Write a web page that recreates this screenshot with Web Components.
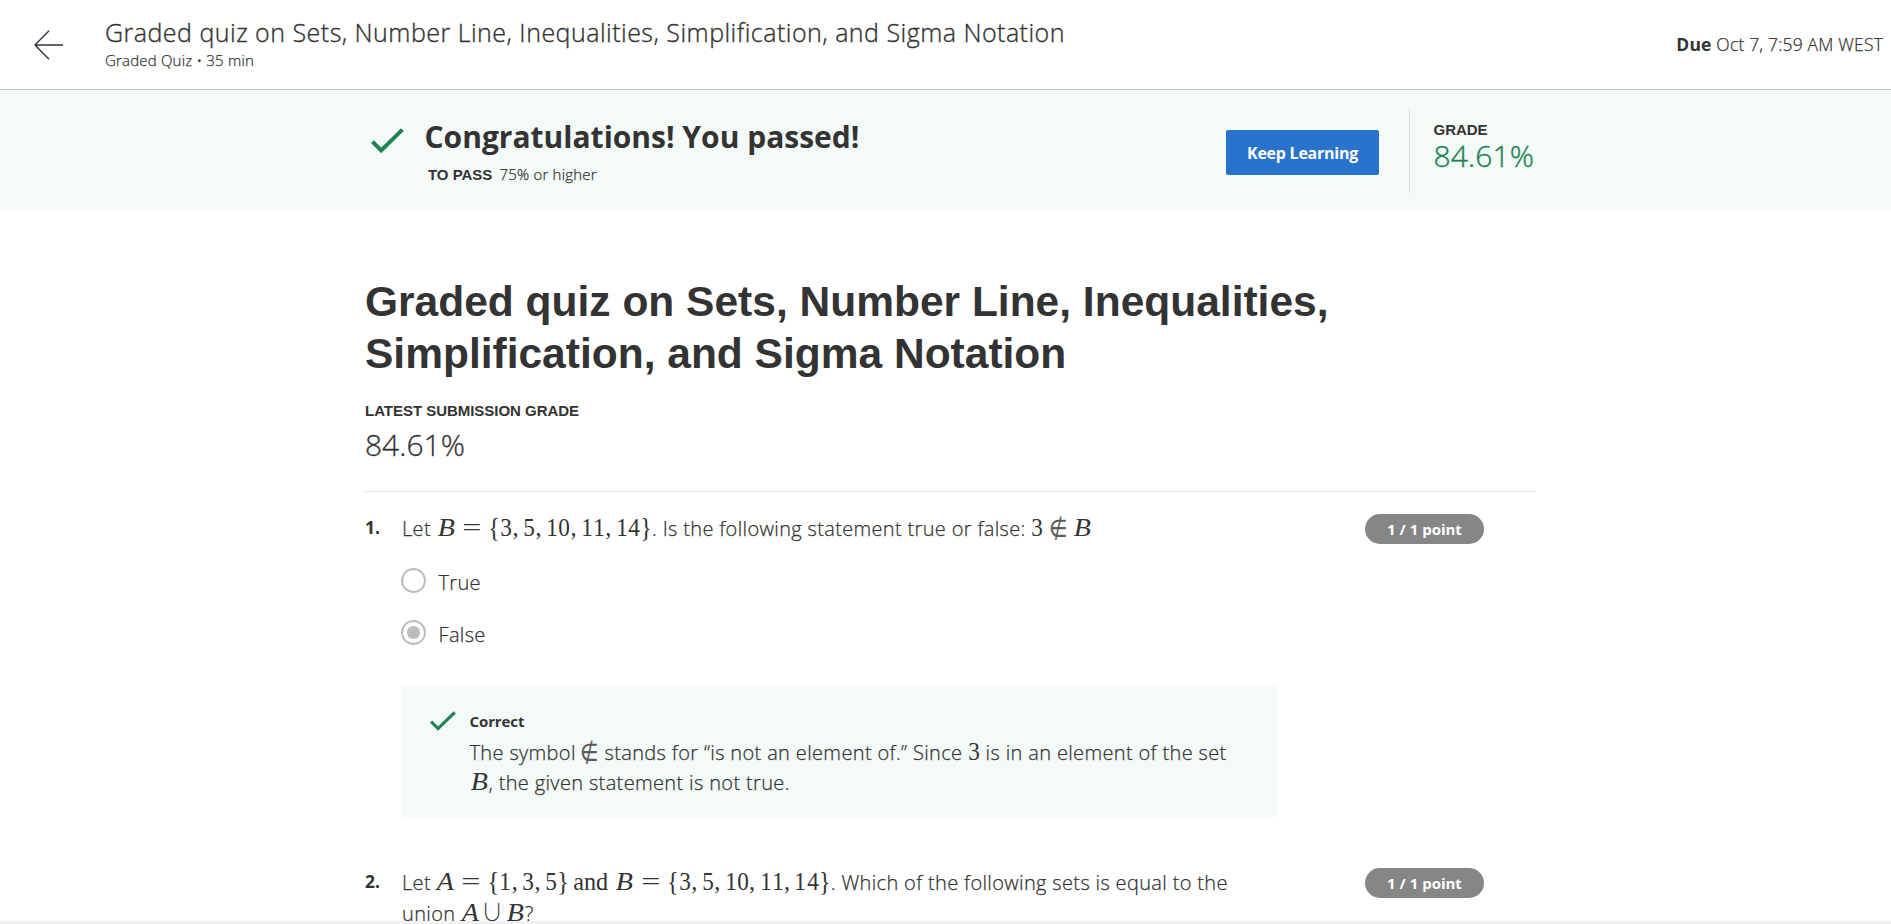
<!DOCTYPE html>
<html lang="en">
<head>
<meta charset="utf-8">
<title>Graded quiz</title>
<style>
html,body{margin:0;height:100%;background:#fff}
body{font-family:"Open Sans",sans-serif;color:#333;overflow:hidden}
</style>
</head>
<body>
<quiz-page></quiz-page>
<script>
const define = (name, html, setup) => {
  const t = document.createElement('template');
  t.innerHTML = html;
  customElements.define(name, class extends HTMLElement {
    constructor() {
      super();
      this.attachShadow({mode: 'open'}).append(t.content.cloneNode(true));
    }
    connectedCallback() { if (setup) setup(this, this.shadowRoot); }
  });
};

define('check-icon', `<style>:host{display:block;flex:none}svg{display:block;width:100%;height:100%}</style>
<svg viewBox="0 0 33 26" fill="none" stroke="#1d8354" stroke-width="4"><path d="M1.4 13.6 L10.2 22.4 L31.4 1.6"/></svg>`);

/* Inline formula: each character of the expression gets its own typeset box. */
const BOX = {
  'A':['v',.75,'1.16,1'], 'B':['v',.785,'1.16,1'], '=':['o',.778,'1.4,1',.285], '{':['n',.5,'1,1.1'], '}':['n',.5,'1,1.1'],
  ',':['n',.278,'1,1',0,.167], '∪':['u',.667,'.9,1',.222], '∉':['e',.667,'.83,1',.278]
};
define('math-expr', `<style>
:host{white-space:nowrap;letter-spacing:0;-webkit-text-stroke:0;font:24.2px/0 "Liberation Serif",serif}
b{font-weight:inherit;display:inline-block;text-align:center;line-height:0}
i{display:inline-block;line-height:0;margin:0 -1em}
.n,.o,.u,.e{font-style:normal}
.u{font-family:"Noto Sans CJK JP",sans-serif;font-weight:300}
.e{font-family:"DejaVu Math TeX Gyre","DejaVu Serif",serif;font-size:28px;opacity:.8}
</style><span></span>`, (el, root) => {
  const out = root.querySelector('span');
  out.textContent = '';
  for (const ch of el.textContent.replace(/ /g, '')) {
    const [kind, w, scale, m = 0, mr = m] = BOX[ch] || ['n', .5, '.96,1'];
    const b = document.createElement('b'), i = document.createElement('i');
    const solo = el.hasAttribute('solo');
    b.style.cssText = `width:${w}em;margin:0 ${solo ? 0 : mr}em 0 ${solo ? 0 : m}em`;
    i.className = kind; i.textContent = ch; i.style.transform = `scale(${scale})`;
    b.append(i); out.append(b);
  }
});

define('quiz-header', `<style>
:host{display:flex;box-sizing:border-box;height:90px;border-bottom:1px solid #bdbabd;background:#fff;padding:0 8px 0 34px;-webkit-text-stroke:.25px}
svg{display:block;width:30px;height:30px;margin:29.5px 41px 0 0;flex:none}
.t{padding-top:16px;flex:1}
h2{margin:0;font-size:25px;line-height:33px;font-weight:300;letter-spacing:.48px;-webkit-text-stroke:.35px}
p{margin:0;font-size:15px;line-height:22px;font-weight:300;letter-spacing:.19px}
.d{font-size:17.5px;line-height:24px;padding-top:31.5px;font-weight:300;letter-spacing:.18px}
.d b{font-weight:700;-webkit-text-stroke:0}
</style>
<svg viewBox="0 0 30 30" fill="none" stroke="#2f3640" stroke-width="1.4"><path d="M29 15H1M15 .8 L1 15 L15 29.2"/></svg>
<div class="t"><h2>Graded quiz on Sets, Number Line, Inequalities, Simplification, and Sigma Notation</h2><p>Graded Quiz • 35 min</p></div>
<div class="d"><b>Due</b> Oct 7, 7:59 AM WEST</div>`);

define('caps-label', `<style>:host{display:inline-block;font:bold 15px/20px "Liberation Sans",Arial,sans-serif;letter-spacing:-.03px;-webkit-text-stroke:0}</style><slot></slot>`);
define('primary-button', `<style>:host{display:block;width:153px;height:45px;background:#2a73cc;color:#fff;border-radius:2px;text-align:center;font-weight:700;font-size:16px;letter-spacing:-.25px;line-height:46px}</style><slot></slot>`);

define('result-banner', `<style>
:host{display:flex;box-sizing:border-box;height:120px;background:#f3faf8;padding-left:365px}
check-icon{width:33px;height:26px;margin:37.5px 21px 0 6px}
.t{padding-top:27px;width:801px}
h3{margin:0 0 0 -.5px;font-size:30px;line-height:40px;font-weight:700}
p{margin:6px 0 0 3px;font-size:15px;line-height:22px;font-weight:300;letter-spacing:.22px;-webkit-text-stroke:.25px}
p span{margin-left:3px}
primary-button{margin-top:40px}
.g{margin:18px 0 0 30px;border-left:1px solid #ddd;height:85px;padding-left:23.5px;box-sizing:border-box}
.g caps-label{display:block;margin-top:12px;height:20px}
.g div{font-size:30px;line-height:36px;color:#1d8354;font-weight:300;margin-top:-2px;letter-spacing:.1px;-webkit-text-stroke:.4px}
</style>
<check-icon></check-icon>
<div class="t"><h3>Congratulations! You passed!</h3><p><caps-label>TO PASS</caps-label> <span>75% or higher</span></p></div>
<primary-button>Keep Learning</primary-button>
<div class="g"><caps-label>GRADE</caps-label><div>84.61%</div></div>`);

define('quiz-title', `<style>
:host{display:block;box-sizing:border-box;border-bottom:1px solid #e1e1e1;height:282px}
h1{margin:0;padding-top:66px;font:bold 42.5px/52px "Liberation Sans",Arial,sans-serif}
caps-label{display:block;margin-top:21px}
p{margin:4px 0 0;font-size:30px;line-height:40px;font-weight:300;-webkit-text-stroke:.3px}
</style>
<h1>Graded quiz on Sets, Number Line, Inequalities,<br>Simplification, and Sigma Notation</h1>
<caps-label>LATEST SUBMISSION GRADE</caps-label>
<p>84.61%</p>`);

define('point-pill', `<style>:host{display:block;width:119px;height:30px;border-radius:15px;background:#868686;color:#fff;text-align:center;font-weight:700;font-size:15px;line-height:30px}</style><slot></slot>`);

define('quiz-question', `<style>
:host{display:grid;grid-template-columns:37px 963px 119px;align-items:start}
.n{font-size:17.5px;font-weight:700;line-height:30px;margin-top:-1px}
.q{font-size:20px;line-height:31px;font-weight:300;letter-spacing:.34px;-webkit-text-stroke:.25px}
point-pill{margin-top:1px}
.more{grid-column:2}
</style>
<div class="n"><slot name="n"></slot></div><div class="q"><slot name="q"></slot></div><point-pill><slot name="p"></slot></point-pill><div class="more"><slot></slot></div>`);

define('radio-option', `<style>
:host{display:flex;height:52px;font-size:20px;font-weight:300;line-height:30px;letter-spacing:.34px;-webkit-text-stroke:.25px}
i{box-sizing:border-box;width:25px;height:25px;border:2.5px solid #bdbdbd;border-radius:50%;margin:0 12.5px 0 -1px;display:grid;place-items:center}
:host([checked]) i::after{content:"";width:12.5px;height:12.5px;border-radius:50%;background:#bdbdbd}
</style><i></i><slot></slot>`);

define('feedback-box', `<style>
:host{display:flex;box-sizing:border-box;width:875px;height:131px;background:#f3faf8;padding-left:28px}
check-icon{width:26px;height:20.5px;margin:25px 13.5px 0 0}
b{display:block;font-size:15px;line-height:22px;font-weight:700;margin-top:24px;letter-spacing:-.1px}
p{margin:6px 0 0;font-size:20px;line-height:30px;font-weight:300;letter-spacing:.35px;-webkit-text-stroke:.25px}
</style><check-icon></check-icon><div><b><slot name="h"></slot></b><p><slot></slot></p></div>`);

define('quiz-page', `<style>
:host{display:flex;flex-direction:column;height:924px;overflow:hidden}
main{flex:1;min-height:0;overflow:hidden;padding-left:365px}
quiz-title{width:1170px}
.q1{margin-top:21px}
.opts{padding-top:24px}
feedback-box{margin-top:14px}
.q2{margin-top:50px}
.and{font:24.2px/0 "Liberation Serif",serif;letter-spacing:0;-webkit-text-stroke:0;margin-right:1.5px;margin-left:-1.5px}
footer{height:3px;background:#f1f1f1}
[solo]{margin-right:1.5px}
</style>
<quiz-header></quiz-header>
<result-banner></result-banner>
<main>
<quiz-title></quiz-title>
<quiz-question class="q1"><span slot="n">1.</span><span slot="q">Let <math-expr>B={3,5,10,11,14}</math-expr>. Is the following statement true or false: <math-expr>3∉B</math-expr></span><span slot="p">1 / 1 point</span>
<div class="opts"><radio-option>True</radio-option><radio-option checked>False</radio-option></div>
<feedback-box><span slot="h">Correct</span>The symbol <math-expr solo>∉</math-expr> stands for “is not an element of.” Since <math-expr>3</math-expr> is in an element of the set<br><math-expr>B</math-expr>, the given statement is not true.</feedback-box>
</quiz-question>
<quiz-question class="q2"><span slot="n">2.</span><span slot="q">Let <math-expr>A={1,3,5}</math-expr> <span class="and">and</span> <math-expr>B={3,5,10,11,14}</math-expr>. Which of the following sets is equal to the<br>union <math-expr>A∪B</math-expr>?</span><span slot="p">1 / 1 point</span></quiz-question>
</main>
<footer></footer>`);
</script>
</body>
</html>
